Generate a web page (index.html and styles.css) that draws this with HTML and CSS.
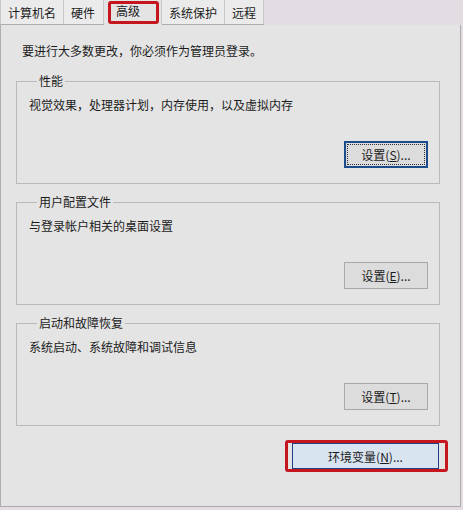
FILE: index.html
```html
<!DOCTYPE html>
<html lang="zh-CN">
<head>
    <meta charset="UTF-8">
    <meta name="viewport" content="width=device-width, initial-scale=1.0">
    <title>系统属性 - 高级</title>
    <link rel="stylesheet" href="styles.css">
</head>
<body>
    <div class="dialog">
        <ul class="tabs">
            <li class="tab">计算机名</li>
            <li class="tab">硬件</li>
            <li class="tab active"><span class="mark">高级</span></li>
            <li class="tab">系统保护</li>
            <li class="tab">远程</li>
        </ul>
        <div class="panel">
            <p class="intro">要进行大多数更改，你必须作为管理员登录。</p>

            <fieldset class="group">
                <legend>性能</legend>
                <p class="desc">视觉效果，处理器计划，内存使用，以及虚拟内存</p>
                <div class="row">
                    <button class="btn focus">设置(<u>S</u>)...</button>
                </div>
            </fieldset>

            <fieldset class="group">
                <legend>用户配置文件</legend>
                <p class="desc">与登录帐户相关的桌面设置</p>
                <div class="row">
                    <button class="btn">设置(<u>E</u>)...</button>
                </div>
            </fieldset>

            <fieldset class="group">
                <legend>启动和故障恢复</legend>
                <p class="desc">系统启动、系统故障和调试信息</p>
                <div class="row">
                    <button class="btn">设置(<u>T</u>)...</button>
                </div>
            </fieldset>

            <div class="footer">
                <span class="mark wide">
                    <button class="btn env">环境变量(<u>N</u>)...</button>
                </span>
            </div>
        </div>
    </div>
</body>
</html>
```

FILE: styles.css
```css
body {
    margin: 0;
    background: #e4dce3;
    font-family: "Noto Sans CJK SC", "Liberation Sans", sans-serif;
    font-size: 12px;
    color: #1b1b1b;
}
.dialog {
    width: 461px;
}
/* 标签页 */
.tabs {
    list-style: none;
    margin: 0;
    padding: 0;
    display: flex;
    height: 25px;
}
.tabs .tab {
    line-height: 16px;
    padding: 5px 7px 4px 7px;
    background: #ebebeb;
    border-right: 1px solid #c8c8c8;
    border-bottom: 1px solid #adadad;
}
.tabs .tab:first-child {
    border-left: 1px solid #c8c8c8;
}
.tabs .tab:nth-child(2) {
    padding-right: 8px;
}
.tabs .tab.active {
    padding: 1px 2px 0 4px;
    background: #e4e4e4;
    border-bottom-color: #e4e4e4;
}
.mark {
    display: inline-block;
    border: 3px solid #c4161c;
    border-radius: 3px;
}
.tabs .tab.active .mark {
    width: 40px;
    height: 17px;
    padding: 0 0 0 5px;
    line-height: 14px;
}
/* 面板 */
.panel {
    height: 482px;
    background: #e4e4e4;
    border: 1px solid #adadad;
    border-top: none;
    padding: 18px 20px 0 15px;
    box-sizing: border-box;
}
.intro {
    margin: 0 0 14px 6px;
    line-height: 16px;
}
.group {
    margin: 0 0 10px 0;
    padding: 8px 11px 15px 12px;
    border: 1px solid #b9b9b9;
    min-width: 0;
}
.group legend {
    margin-left: 8px;
    padding: 0 2px;
    line-height: 16px;
}
.desc {
    margin: 0;
    line-height: 16px;
}
.row {
    display: flex;
    justify-content: flex-end;
    margin-top: 28px;
}
.btn {
    width: 84px;
    height: 27px;
    font-family: inherit;
    font-size: 12px;
    color: #1b1b1b;
    background: #dcdcdc;
    border: 1px solid #a9a9a9;
    padding: 0;
}
.btn.focus {
    border: 2px solid #1c4c8c;
    outline: 1px dotted #333;
    outline-offset: -4px;
}
.footer {
    display: flex;
    justify-content: flex-end;
    margin-top: 14px;
    margin-right: -8px;
}
.mark.wide {
    padding: 0 6px 0 4px;
}
.btn.env {
    display: block;
    width: 147px;
    height: 26px;
    background: #d8e5f0;
    border: 1px solid #213f88;
}
```
